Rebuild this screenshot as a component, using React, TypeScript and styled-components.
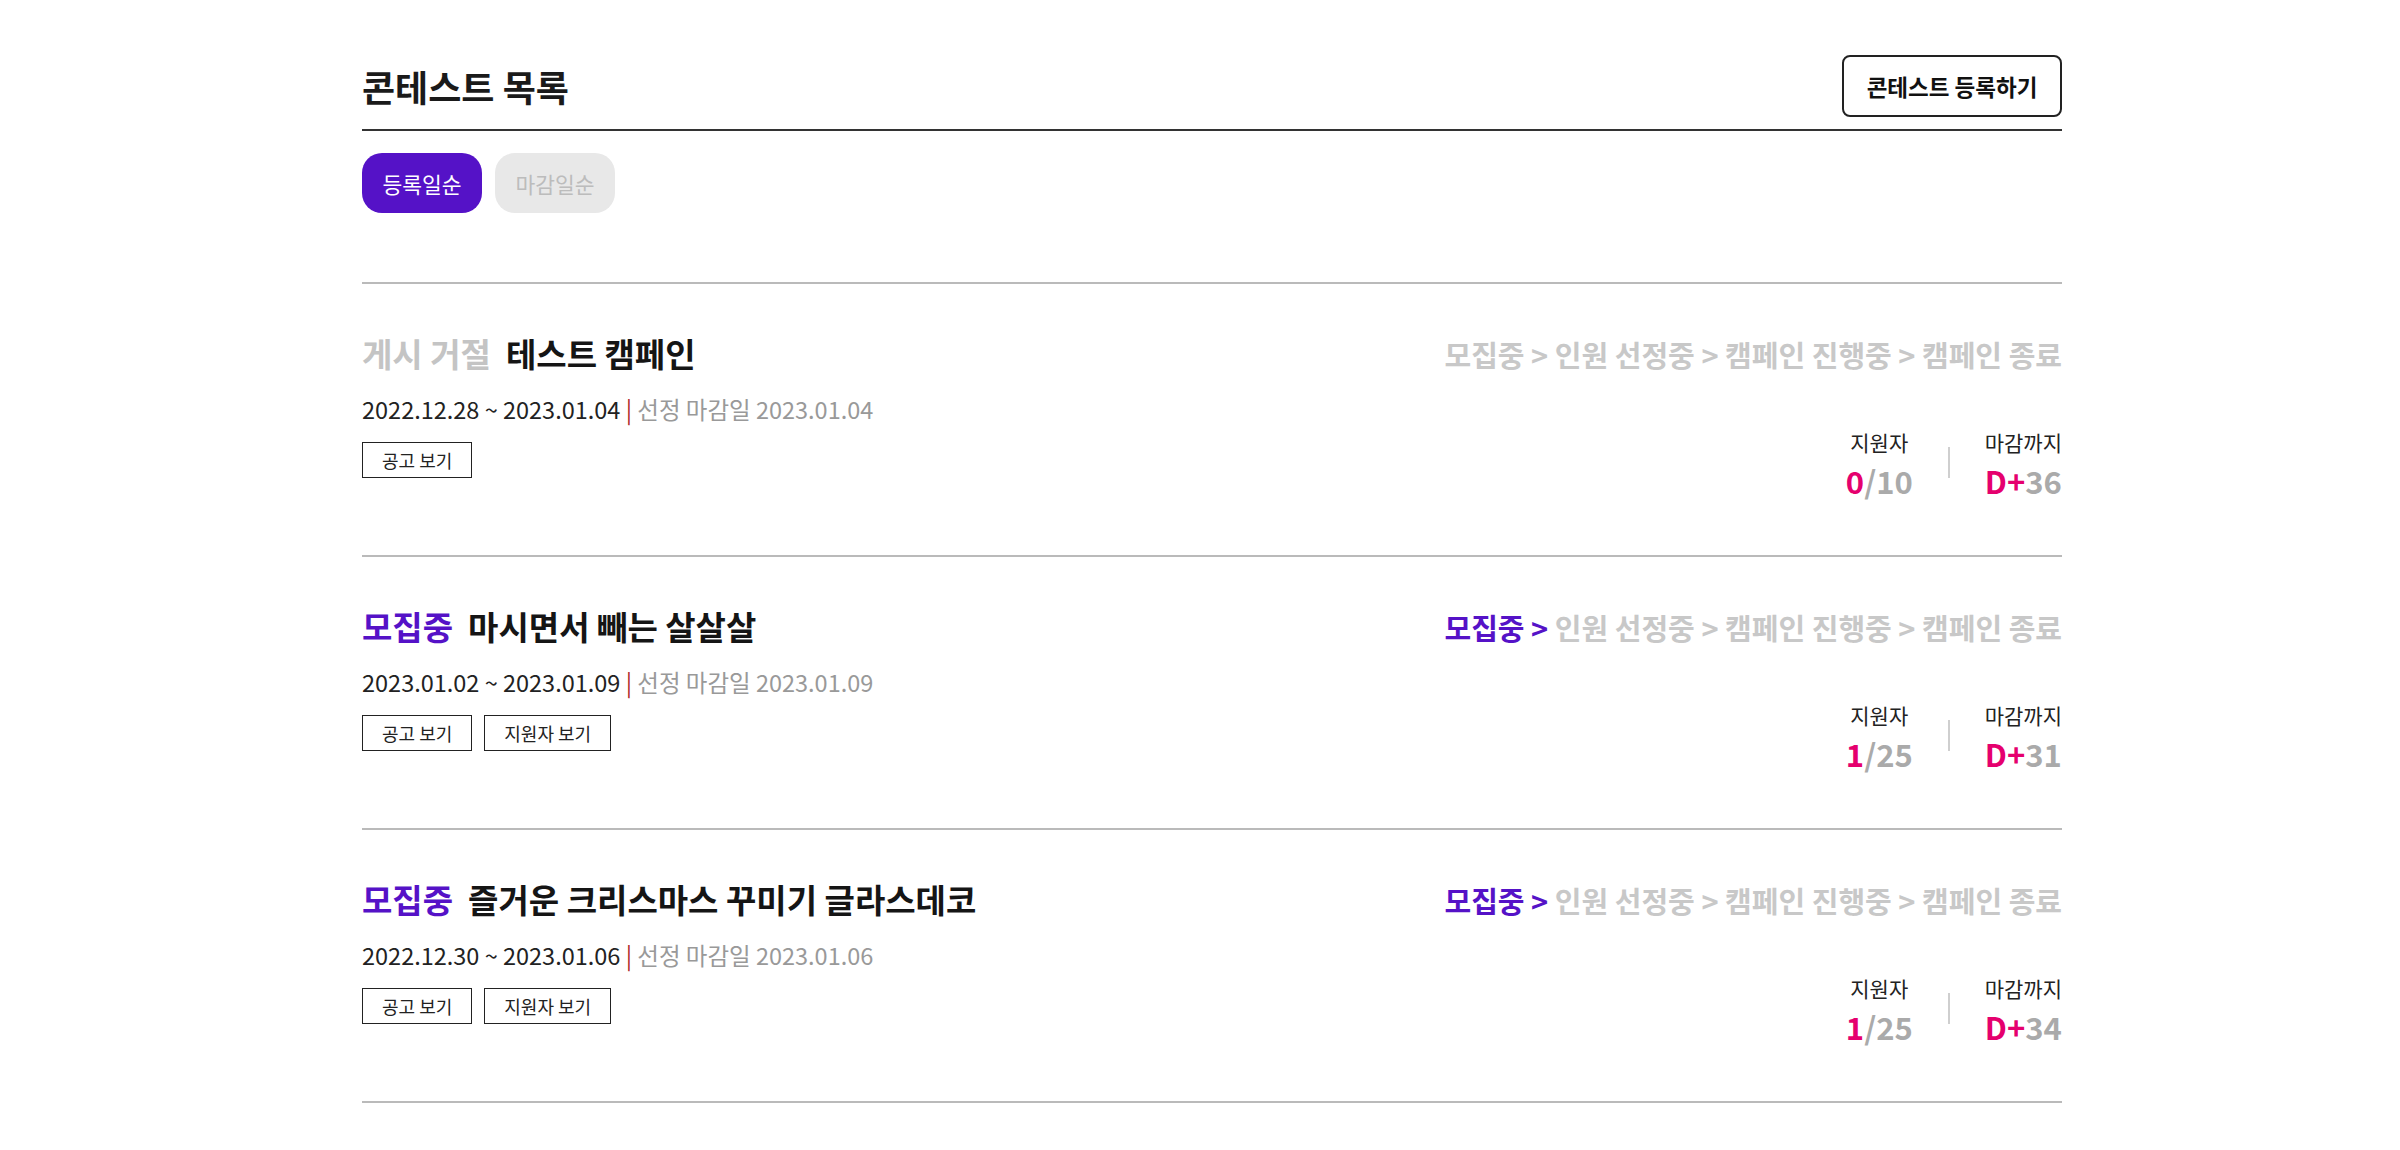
import React from "react";
import styled, { createGlobalStyle } from "styled-components";

const GlobalStyle = createGlobalStyle`
  html, body {
    margin: 0;
    padding: 0;
    background: #ffffff;
  }
  body {
    font-family: "Noto Sans CJK KR", "Noto Sans", sans-serif;
    color: #222;
  }
  * { box-sizing: border-box; }
`;

const PURPLE = "#5512c7";
const PINK = "#e5006e";

const Page = styled.main`
  width: 1700px;
  margin-left: 362px;
  padding-top: 55px;
  padding-bottom: 40px;
`;

const HeaderBar = styled.header`
  display: flex;
  align-items: center;
  justify-content: space-between;
  padding-bottom: 12px;
  border-bottom: 2px solid #333;
`;

const Heading = styled.h1`
  margin: 0;
  font-size: 36px;
  font-weight: 700;
  color: #1a1a1a;
  line-height: 52px;
`;

const RegisterButton = styled.button`
  height: 62px;
  width: 220px;
  border: 2px solid #222;
  border-radius: 8px;
  background: #fff;
  font-family: inherit;
  font-size: 22.5px;
  font-weight: 700;
  color: #111;
  cursor: pointer;
`;

const Tabs = styled.nav`
  display: flex;
  gap: 13px;
  margin-top: 22px;
`;

const Tab = styled.button<{ $active?: boolean }>`
  width: 120px;
  height: 60px;
  border: none;
  border-radius: 20px;
  font-family: inherit;
  font-size: 21.5px;
  background: ${(p) => (p.$active ? PURPLE : "#e8e8e8")};
  color: ${(p) => (p.$active ? "#fff" : "#bcbcbc")};
  cursor: pointer;
`;

const List = styled.section`
  margin-top: 69px;
  border-bottom: 2px solid #bababa;
`;

const Row = styled.article`
  display: flex;
  justify-content: space-between;
  align-items: flex-start;
  border-top: 2px solid #bababa;
  padding: 48px 0 52px;
`;

const Left = styled.div`
  display: flex;
  flex-direction: column;
`;

const TitleLine = styled.h2`
  margin: 0;
  display: flex;
  gap: 15px;
  font-size: 33px;
  font-weight: 700;
  line-height: 42px;
  color: #151515;
`;

const Status = styled.span<{ $tone: "rejected" | "open" }>`
  color: ${(p) => (p.$tone === "open" ? PURPLE : "#c4c4c4")};
`;

const DateLine = styled.p`
  margin: 20px 0 0;
  font-size: 23.5px;
  line-height: 31px;
  color: #222;
`;

const Bar = styled.span`
  color: #b02a2a;
`;

const Deadline = styled.span`
  color: #999;
`;

const ActionRow = styled.div`
  display: flex;
  gap: 12px;
  margin-top: 17px;
`;

const SmallButton = styled.button`
  height: 36px;
  padding: 0 19px;
  border: 1.5px solid #222;
  background: #fff;
  font-family: inherit;
  font-size: 18px;
  color: #222;
  border-radius: 0;
  cursor: pointer;
`;

const Right = styled.div`
  display: flex;
  flex-direction: column;
  align-items: flex-end;
`;

const Steps = styled.div`
  font-size: 29px;
  font-weight: 700;
  line-height: 44px;
  color: #c8c8c8;
  white-space: nowrap;
`;

const Current = styled.span`
  color: ${PURPLE};
`;

const Stats = styled.div`
  display: flex;
  align-items: center;
  gap: 35px;
  margin-top: 51px;
`;

const StatCol = styled.div`
  display: flex;
  flex-direction: column;
  align-items: center;
`;

const StatLabel = styled.span`
  font-size: 21px;
  line-height: 31px;
  color: #222;
`;

const StatValue = styled.span`
  font-size: 31px;
  font-weight: 700;
  line-height: 45px;
  color: #aaa;
`;

const Accent = styled.span`
  color: ${PINK};
`;

const Divider = styled.span`
  width: 2px;
  height: 31px;
  background: #cfcfcf;
  margin-bottom: 6px;
`;

type Campaign = {
  status: string;
  tone: "rejected" | "open";
  title: string;
  start: string;
  end: string;
  deadline: string;
  applicants: number;
  capacity: number;
  dday: number;
  showApplicants: boolean;
};

const campaigns: Campaign[] = [
  {
    status: "게시 거절",
    tone: "rejected",
    title: "테스트 캠페인",
    start: "2022.12.28",
    end: "2023.01.04",
    deadline: "2023.01.04",
    applicants: 0,
    capacity: 10,
    dday: 36,
    showApplicants: false,
  },
  {
    status: "모집중",
    tone: "open",
    title: "마시면서 빼는 살살살",
    start: "2023.01.02",
    end: "2023.01.09",
    deadline: "2023.01.09",
    applicants: 1,
    capacity: 25,
    dday: 31,
    showApplicants: true,
  },
  {
    status: "모집중",
    tone: "open",
    title: "즐거운 크리스마스 꾸미기 글라스데코",
    start: "2022.12.30",
    end: "2023.01.06",
    deadline: "2023.01.06",
    applicants: 1,
    capacity: 25,
    dday: 34,
    showApplicants: true,
  },
];

function CampaignRow({ c }: { c: Campaign }) {
  return (
    <Row>
      <Left>
        <TitleLine>
          <Status $tone={c.tone}>{c.status}</Status>
          <span>{c.title}</span>
        </TitleLine>
        <DateLine>
          {c.start} ~ {c.end} <Bar>|</Bar>{" "}
          <Deadline>선정 마감일 {c.deadline}</Deadline>
        </DateLine>
        <ActionRow>
          <SmallButton>공고 보기</SmallButton>
          {c.showApplicants && <SmallButton>지원자 보기</SmallButton>}
        </ActionRow>
      </Left>
      <Right>
        <Steps>
          {c.tone === "open" ? (
            <>
              <Current>모집중 &gt;</Current> 인원 선정중 &gt; 캠페인 진행중 &gt; 캠페인 종료
            </>
          ) : (
            <>모집중 &gt; 인원 선정중 &gt; 캠페인 진행중 &gt; 캠페인 종료</>
          )}
        </Steps>
        <Stats>
          <StatCol>
            <StatLabel>지원자</StatLabel>
            <StatValue>
              <Accent>{c.applicants}</Accent>/{c.capacity}
            </StatValue>
          </StatCol>
          <Divider />
          <StatCol>
            <StatLabel>마감까지</StatLabel>
            <StatValue>
              <Accent>D+</Accent>
              {c.dday}
            </StatValue>
          </StatCol>
        </Stats>
      </Right>
    </Row>
  );
}

export default function App() {
  return (
    <>
      <GlobalStyle />
      <Page>
        <HeaderBar>
          <Heading>콘테스트 목록</Heading>
          <RegisterButton>콘테스트 등록하기</RegisterButton>
        </HeaderBar>
        <Tabs>
          <Tab $active>등록일순</Tab>
          <Tab>마감일순</Tab>
        </Tabs>
        <List>
          {campaigns.map((c, i) => (
            <CampaignRow key={i} c={c} />
          ))}
        </List>
      </Page>
    </>
  );
}
